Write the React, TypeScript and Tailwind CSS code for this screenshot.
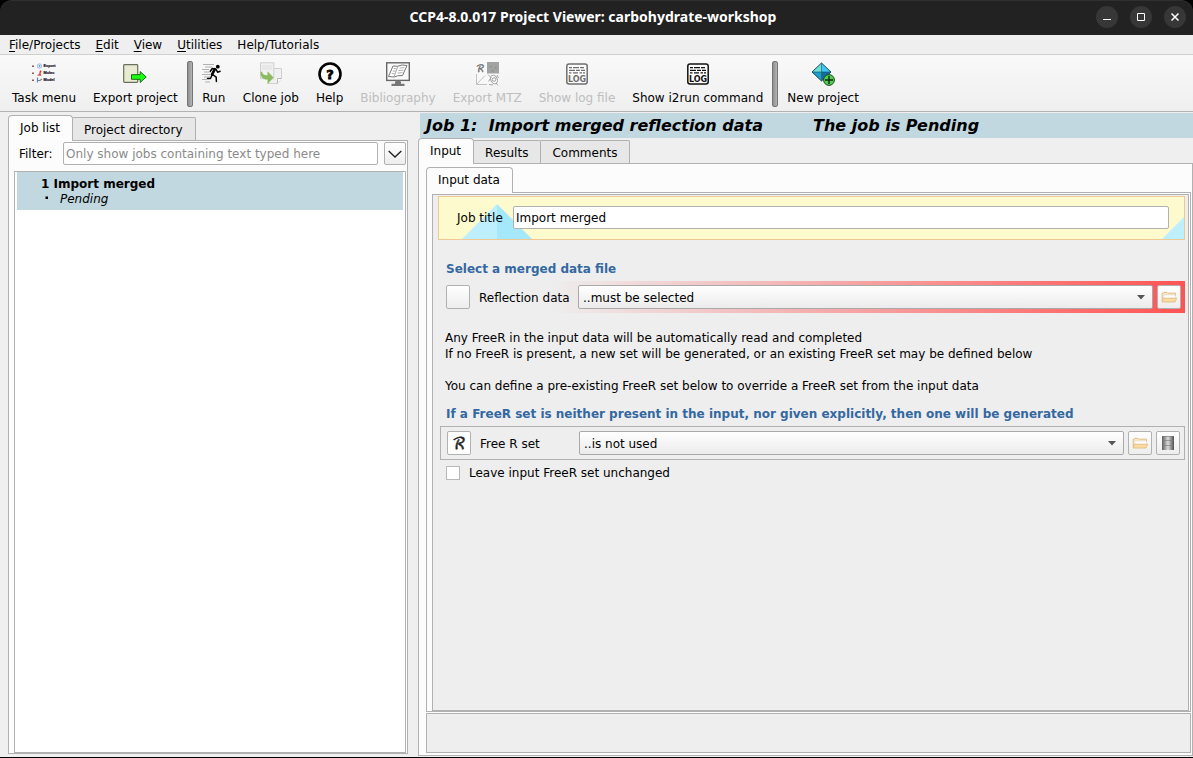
import type { ReactNode } from "react";

const frame = "border-[#b1b1b1]";

function TaskMenuIcon() {
  return (
    <svg width="26" height="24" viewBox="0 0 26 24" fontFamily="Liberation Sans" fontSize="3.8" fontWeight="bold">
      <g fill="#8a5a5a">
        <path d="M1 3.500h2v1.500H1zM1 10.500h2v1.500H1zM1 17.500h2v1.500H1z" />
      </g>
      <circle cx="8.500" cy="4" r="2.200" fill="#dbe9fb" stroke="#8db4e6" strokeWidth=".8" />
      <path d="M8 3l1.500 1L8 5z" fill="#4778c4" />
      <path d="M9 8.500l1.300.5-1 2.500.7 2-3.500-.3 2-1z" fill="#d2302c" stroke="#d2302c" strokeWidth=".4" />
      <path d="M6.500 15.500v5M6.500 18.500h2.500l2-1.500" stroke="#6782a8" fill="none" strokeWidth="1.200" />
      <g fill="#1c1624" stroke="#1c1624" strokeWidth=".2">
        <text x="12.500" y="5.300">Export</text>
        <text x="12.500" y="12.300">Molec</text>
        <text x="12.500" y="19.300">Model</text>
      </g>
    </svg>
  );
}

function ExportIcon() {
  return (
    <svg width="24" height="24" viewBox="0 0 24 24">
      <rect x=".7" y="2.700" width="14" height="17.600" rx=".8" fill="#e8ead2" stroke="#6b705d" strokeWidth="1.200" />
      <path d="M8.500 12.700h8.700V9.600l6 5.400-6 5.400v-3.100H8.500z" fill="#1aff12" stroke="#166b13" strokeWidth="1" />
    </svg>
  );
}

function RunIcon() {
  return (
    <svg width="24" height="24" viewBox="0 0 24 24">
      <g stroke="#b0b0b0" strokeWidth="1" fill="none">
        <path d="M1 2.500h11M3 5h7M0 7.500h7M2 10h7M0 12.500h8M2 15h6M0 17.500h5M3 20h5" />
      </g>
      <circle cx="15.800" cy="4.700" r="1.900" fill="#000" />
      <path d="M12.800 7.200l-2.800 5.500" stroke="#000" strokeWidth="2.600" strokeLinecap="round" />
      <path d="M8.300 9.200l2-2.700 3.600.7 1.700 3 2.500-1M10.500 12.500l3.700 2.600.2 4.300M10 13l-1.500 3.500H5.500" stroke="#000" strokeWidth="1.500" fill="none" strokeLinejoin="round" strokeLinecap="round" />
    </svg>
  );
}

function CloneIcon() {
  return (
    <svg width="24" height="24" viewBox="0 0 24 24">
      <path d="M9.500 6.500h13v10l-4 5h-9z" fill="#f0f0f0" stroke="#cfcfcf" />
      <path d="M18.500 21.500v-5h4" fill="#fff" stroke="#b9b9b9" />
      <path d="M1.500.8h13.300v16H1.500z" fill="#f1f1f1" stroke="#cfcfcf" />
      <path d="M3 3h10v5H3z" fill="#e8e8e8" />
      <path d="M1.500 10c0 5 2 7.500 7 7.500v4.800l6-6.800-6-6.300v4C5 13.500 3.500 12.500 3 9.500z" fill="#8abb5d" />
    </svg>
  );
}

function HelpIcon() {
  return (
    <svg width="24" height="24" viewBox="0 0 24 24">
      <circle cx="12" cy="12" r="10.500" fill="#fff" stroke="#000" strokeWidth="2.600" />
      <text x="12" y="17" textAnchor="middle" fontFamily="DejaVu Sans" fontSize="13" fontWeight="bold" stroke="#000" strokeWidth=".8">?</text>
    </svg>
  );
}

function BibliographyIcon() {
  return (
    <svg width="26" height="24" viewBox="0 0 26 24">
      <rect x="1.700" y=".8" width="22.600" height="17.600" fill="#fafafa" stroke="#666" strokeWidth="1.400" />
      <path d="M3.500 14.500L8 4l4.500.3 4.500-1.300 5 .5-4.500 10-5 .3-3 1.200z" fill="#fff" stroke="#777" strokeWidth="1" />
      <path d="M12.800 4.500L9 15M8.700 6.500l3 .2M7.700 9l3 .2M6.700 11.500l3 .2M14.500 6l5-.3M13.500 8.500l5-.3M12.500 11l5-.3" stroke="#999" strokeWidth=".8" fill="none" />
      <path d="M10.500 18.500h5V22h-5zM6.500 21.800h3.500v-2h1.500v2h3v-2h1.500v2h3.500V24h-13z" fill="#777" />
    </svg>
  );
}

function MtzIcon() {
  return (
    <svg width="24" height="24" viewBox="0 0 24 24">
      <path d="M0 0h24v24H0z" fill="#f8f8f8" />
      <text x="1" y="10" fontFamily="DejaVu Math TeX Gyre, DejaVu Sans" fontSize="10" fill="#666" stroke="#666" strokeWidth=".3">ℛ</text>
      <path d="M12 0h12v11.500H12z" fill="#a2a2a2" />
      <path d="M15 4h1.500v1.500H15zM20 5h1.500v1.500H20zM17 8h1.500v1.500H17z" fill="#8a8a8a" />
      <path d="M1.500 12v10.500H12M2 22l8-8.500" stroke="#c0c0c0" fill="none" />
      <g fill="none" stroke="#999" strokeWidth=".9">
        <circle cx="19" cy="17.500" r="1.800" />
        <ellipse cx="19" cy="17.500" rx="3.200" ry="4.500" transform="rotate(-25 19 17.500)" />
        <path d="M13 12.500l3 3-2.500 4M22 13l1.500 3M21 21l2 2.500M14 22.500l4 .5" />
      </g>
    </svg>
  );
}

function LogIcon({ color }: { color: string }) {
  return (
    <svg width="24" height="24" viewBox="0 0 24 24">
      <rect x="1.800" y="2" width="20.400" height="20" rx="2.200" fill="#fdfdfd" stroke={color} strokeWidth="1.500" />
      <path d="M4 5.700h3M8 5.700h6M15 5.700h4M4 8.300h6M11 8.300h4M16 8.300h4M4 10.900h2.500M8 10.900h5M14.500 10.900h2.500M18 10.900h2" stroke={color} strokeWidth="1.200" />
      <text x="12" y="20" textAnchor="middle" fontFamily="DejaVu Sans" fontWeight="bold" fontSize="8" fill={color}>LOG</text>
    </svg>
  );
}

function NewProjectIcon() {
  return (
    <svg width="24" height="24" viewBox="0 0 24 24">
      <path d="M10.500 1L1 10h9.500z" fill="#69dfd8" />
      <path d="M10.500 1L20 10h-9.500z" fill="#3fc6f2" />
      <path d="M1 10h9.500v9z" fill="#1b9dce" />
      <path d="M20 10h-9.500v9z" fill="#0d6f9c" />
      <path d="M10.500 1L1 10l9.500 9L20 10z" fill="none" stroke="#1c4d5c" strokeWidth="1" />
      <path d="M1 10h19M10.500 1v18" stroke="#1c4d5c" strokeWidth=".6" />
      <circle cx="18" cy="18" r="5.400" fill="#56cc57" stroke="#184d1a" strokeWidth="1" />
      <path d="M18 14v8M14 18h8" stroke="#0b2b0c" strokeWidth="1.400" />
    </svg>
  );
}

function FolderIcon() {
  return (
    <svg width="16" height="12" viewBox="0 0 16 12">
      <path d="M1.200 10V2.200h1l.8-.8h3l.8.8h7.700V5" fill="#fbe9c8" stroke="#e3bd84" strokeWidth="1" />
      <path d="M2.800 4h11.500v3.500H2.800z" fill="#fff" stroke="#d8d8d8" strokeWidth=".6" />
      <path d="M2.500 7.200h13.200L14 11H1z" fill="#fcdca0" stroke="#e0b878" strokeWidth=".8" />
    </svg>
  );
}

function DatabaseIcon() {
  return (
    <svg width="14" height="16" viewBox="0 0 14 16">
      <defs>
        <linearGradient id="drum">
          <stop offset="0" stopColor="#5d5d5d" />
          <stop offset=".5" stopColor="#dcdcdc" />
          <stop offset="1" stopColor="#4d4d4d" />
        </linearGradient>
      </defs>
      <path d="M1 1h12v14H1z" fill="url(#drum)" />
      <path d="M1 1.500h12M1 5.500h12M1 10.500h12" stroke="#777" strokeWidth=".6" />
    </svg>
  );
}

function ScriptRIcon() {
  return (
    <svg width="20" height="20" viewBox="0 0 20 20">
      <text x="10" y="15.500" textAnchor="middle" fontFamily="DejaVu Math TeX Gyre, DejaVu Sans" fontSize="16" fill="#222" stroke="#222" strokeWidth=".5">ℛ</text>
    </svg>
  );
}

function ToolButton({ icon, label, disabled }: { icon: ReactNode; label: string; disabled?: boolean }) {
  return (
    <button
      type="button"
      disabled={disabled}
      className="flex shrink-0 flex-col items-center gap-1 px-2 whitespace-nowrap disabled:text-[#bebebe]"
    >
      {icon}
      <span>{label}</span>
    </button>
  );
}

function Divider() {
  return (
    <div className="h-[46px] w-1.5 shrink-0 rounded-xs border border-[#757575] bg-linear-to-r from-[#8f8f8f] to-[#b5b5b5]" />
  );
}

function Tab({ label, active }: { label: string; active?: boolean }) {
  const shape = active
    ? "z-10 -mb-px h-[26px] rounded-t-sm border border-b-0 bg-[#fcfcfc] pb-px"
    : "h-[23px] rounded-tr-xs border-t border-r bg-[#e7e7e7] pt-px";
  return (
    <button type="button" role="tab" aria-selected={!!active} className={`relative pr-3 pl-[11px] ${frame} ${shape}`}>
      {label}
    </button>
  );
}

function Combo({ id, value }: { id: string; value: string }) {
  return (
    <div className="relative min-w-0 flex-1">
      <select
        id={id}
        className="block h-6 w-full appearance-none rounded-xs border border-[#a9a9a9] bg-linear-to-b from-white to-[#ebebeb] pt-px pl-1 text-xs outline-none"
      >
        <option>{value}</option>
      </select>
      <svg className="pointer-events-none absolute top-2.5 right-2" width="8" height="5" viewBox="0 0 8 5">
        <path d="M0 0h8L4 4.500z" fill="#555" />
      </svg>
    </div>
  );
}

function SquareButton({ label, children, plain }: { label: string; children?: ReactNode; plain?: boolean }) {
  return (
    <button
      type="button"
      aria-label={label}
      className={`flex size-6 shrink-0 items-center justify-center rounded-xs border border-[#b1b1b1] ${plain ? "bg-white" : "bg-linear-to-b from-white to-[#ededed]"}`}
    >
      {children}
    </button>
  );
}

function WindowButton({ label, children }: { label: string; children: ReactNode }) {
  return (
    <button type="button" aria-label={label} className="flex size-[22px] items-center justify-center rounded-full bg-[#373737]">
      <svg width="10" height="10" viewBox="0 0 10 10" fill="none" stroke="#fff">
        {children}
      </svg>
    </button>
  );
}

function TitleBar() {
  return (
    <header className="bg-black">
      <div className="grid h-[35px] grid-cols-[1fr_auto_1fr] items-center rounded-t-xl border-t border-[#303030] bg-[#222] pr-[7px] pb-0.5">
        <span />
        <h1 className="font-['Noto_Sans',sans-serif] text-sm font-bold text-white">
          CCP4-8.0.017 Project Viewer: carbohydrate-workshop
        </h1>
        <div className="flex justify-end gap-3">
          <WindowButton label="Minimize">
            <path d="M1 7.500h8" />
          </WindowButton>
          <WindowButton label="Maximize">
            <path d="M1.500 1.500h7v7h-7z" />
          </WindowButton>
          <WindowButton label="Close">
            <path d="M1.500 1.500l7 7M8.500 1.500l-7 7" strokeWidth="1.500" />
          </WindowButton>
        </div>
      </div>
    </header>
  );
}

function MenuBar() {
  const items = ["File/Projects", "Edit", "View", "Utilities"];
  return (
    <nav className="flex h-5 items-center gap-[15px] border-b border-[#d0d0d0] px-[9px]">
      {items.map((item) => (
        <button key={item} type="button">
          <span className="underline underline-offset-2">{item[0]}</span>
          {item.slice(1)}
        </button>
      ))}
      <button type="button">Help/Tutorials</button>
    </nav>
  );
}

function ToolBar() {
  return (
    <div role="toolbar" className="flex h-[57px] items-center gap-px border-b border-[#b1b1b1] bg-linear-to-b from-[#f9f9f9] to-[#efefef] pt-0.5 pl-1">
      <ToolButton icon={<TaskMenuIcon />} label="Task menu" />
      <ToolButton icon={<ExportIcon />} label="Export project" />
      <Divider />
      <ToolButton icon={<RunIcon />} label="Run" />
      <ToolButton icon={<CloneIcon />} label="Clone job" />
      <ToolButton icon={<HelpIcon />} label="Help" />
      <ToolButton icon={<BibliographyIcon />} label="Bibliography" disabled />
      <ToolButton icon={<MtzIcon />} label="Export MTZ" disabled />
      <ToolButton icon={<LogIcon color="#6f6f6f" />} label="Show log file" disabled />
      <ToolButton icon={<LogIcon color="#111" />} label="Show i2run command" />
      <Divider />
      <ToolButton icon={<NewProjectIcon />} label="New project" />
    </div>
  );
}

function JobPanel() {
  return (
    <aside className="flex w-[400px] shrink-0 flex-col pt-[3px] pb-[3px]">
      <div role="tablist" className="flex items-end">
        <Tab label="Job list" active />
        <Tab label="Project directory" />
      </div>
      <div className={`flex flex-1 flex-col border bg-[#fcfcfc] px-px pt-px pb-0 ${frame}`}>
        <div className="flex items-center pl-[9px]">
          <label htmlFor="filter" className="w-11">Filter:</label>
          <input
            id="filter"
            placeholder="Only show jobs containing text typed here"
            className={`h-[23px] min-w-0 flex-1 rounded-xs border bg-white px-0.5 outline-none placeholder:text-[#8a8a8a] ${frame}`}
          />
          <button type="button" aria-label="Filter options" className={`ml-1.5 flex h-[23px] w-[22px] items-center justify-center rounded-xs border bg-linear-to-b from-white to-[#ededed] ${frame}`}>
            <svg width="14" height="8" viewBox="0 0 14 8" fill="none" stroke="#222" strokeWidth="1.400">
              <path d="M.7 1L7 7l6.300-6" />
            </svg>
          </button>
        </div>
        <div className={`mt-1.5 ml-1 flex-1 border bg-white px-0.5 ${frame}`}>
          <div className="h-[38px] bg-[#c1d8e0] pt-[5px] pl-6 leading-[15px]">
            <p className="font-bold">1 Import merged</p>
            <p className="flex gap-3 pl-1 italic">
              <svg width="3" height="15" viewBox="0 0 3 15">
                <path d="M.5 4.500h2.500V7H.5z" />
              </svg>
              Pending
            </p>
          </div>
        </div>
      </div>
    </aside>
  );
}

function JobTitle() {
  return (
    <div className="relative flex h-11 items-center border border-[#efc993] bg-[#fdfacd] pr-[15px] pb-px pl-[18px]">
      <svg className="absolute bottom-0 left-[23px]" width="70" height="35" viewBox="0 0 70 35">
        <path d="M0 35L35 0v35z" fill="#bdefff" />
        <path d="M35 0l35 35H35z" fill="#a5e8fb" />
      </svg>
      <svg className="absolute right-0 bottom-0" width="22" height="22" viewBox="0 0 22 22">
        <path d="M0 22L22 0v22z" fill="#bdefff" />
      </svg>
      <label htmlFor="title" className="relative w-14 shrink-0 pt-px">Job title</label>
      <input id="title" defaultValue="Import merged" className={`relative h-[23px] min-w-0 flex-1 rounded-xs border bg-white px-0.5 pt-px outline-none ${frame}`} />
    </div>
  );
}

function InputForm() {
  return (
    <div className={`flex-1 border bg-[#eee] px-[3px] pt-px ${frame}`}>
      <div className="pl-0.5">
        <JobTitle />
      </div>
      <h2 className="mt-[21px] pl-2.5 leading-[17px] font-bold text-[#3468a0]">Select a merged data file</h2>
      <div className="mt-[3px] ml-1 flex h-8 items-center bg-linear-to-r/srgb from-[#eee] from-15% to-[#ff5353] pr-1 pl-1.5">
        <SquareButton label="Reflection data options" />
        <label htmlFor="reflections" className="ml-[9px] w-[99px] pt-0.5">Reflection data</label>
        <Combo id="reflections" value="..must be selected" />
        <span className="w-1" />
        <SquareButton label="Browse reflection data">
          <FolderIcon />
        </SquareButton>
      </div>
      <div className="mt-[17px] space-y-4 pl-[9px] leading-4">
        <p>
          Any FreeR in the input data will be automatically read and completed
          <br />
          If no FreeR is present, a new set will be generated, or an existing FreeR set may be defined below
        </p>
        <p>You can define a pre-existing FreeR set below to override a FreeR set from the input data</p>
      </div>
      <h2 className="mt-3 pl-2.5 leading-[17px] font-bold text-[#3468a0]">
        If a FreeR set is neither present in the input, nor given explicitly, then one will be generated
      </h2>
      <div className={`mt-[3px] ml-1 flex h-[34px] items-center border pr-1 pl-1.5 ${frame}`}>
        <SquareButton label="Free R set options" plain>
          <ScriptRIcon />
        </SquareButton>
        <label htmlFor="freer" className="ml-[9px] w-[99px] pt-0.5">Free R set</label>
        <Combo id="freer" value="..is not used" />
        <span className="w-1" />
        <SquareButton label="Browse Free R set">
          <FolderIcon />
        </SquareButton>
        <span className="w-1" />
        <SquareButton label="Free R set database">
          <DatabaseIcon />
        </SquareButton>
      </div>
      <div className="mt-[5px] flex items-center gap-[9px] pl-2.5">
        <input id="unchanged" type="checkbox" className="size-3.5 appearance-none border border-[#b9b9b9] bg-white checked:bg-[#3468a0]" />
        <label htmlFor="unchanged">Leave input FreeR set unchanged</label>
      </div>
    </div>
  );
}

function TaskPanel() {
  return (
    <main className="flex min-w-0 flex-1 flex-col pt-px pb-px">
      <div className="ml-0.5 flex h-[25px] items-center gap-[50px] bg-[#c1d8e0] pl-1.5 text-base font-bold whitespace-pre italic">
        <span>{"Job 1:  Import merged reflection data"}</span>
        <span>The job is Pending</span>
      </div>
      <div role="tablist" className="flex items-end">
        <Tab label="Input" active />
        <Tab label="Results" />
        <Tab label="Comments" />
      </div>
      <div className={`flex flex-1 flex-col border bg-[#fcfcfc] pt-[3px] pl-[7px] pr-px pb-0.5 ${frame}`}>
        <div role="tablist" className="flex items-end">
          <Tab label="Input data" active />
        </div>
        <div className={`flex flex-1 flex-col border bg-[#fcfcfc] pt-px pr-px pl-[5px] ${frame}`}>
          <InputForm />
        </div>
        <div className={`mt-px h-10 border bg-[#eee] ${frame}`} />
      </div>
    </main>
  );
}

export default function App() {
  return (
    <div className="flex min-h-screen flex-col border-b border-black bg-[#efefef] font-['DejaVu_Sans',sans-serif] text-xs text-black">
      <TitleBar />
      <MenuBar />
      <ToolBar />
      <div className="flex flex-1 gap-2.5 pl-2">
        <JobPanel />
        <TaskPanel />
      </div>
    </div>
  );
}
